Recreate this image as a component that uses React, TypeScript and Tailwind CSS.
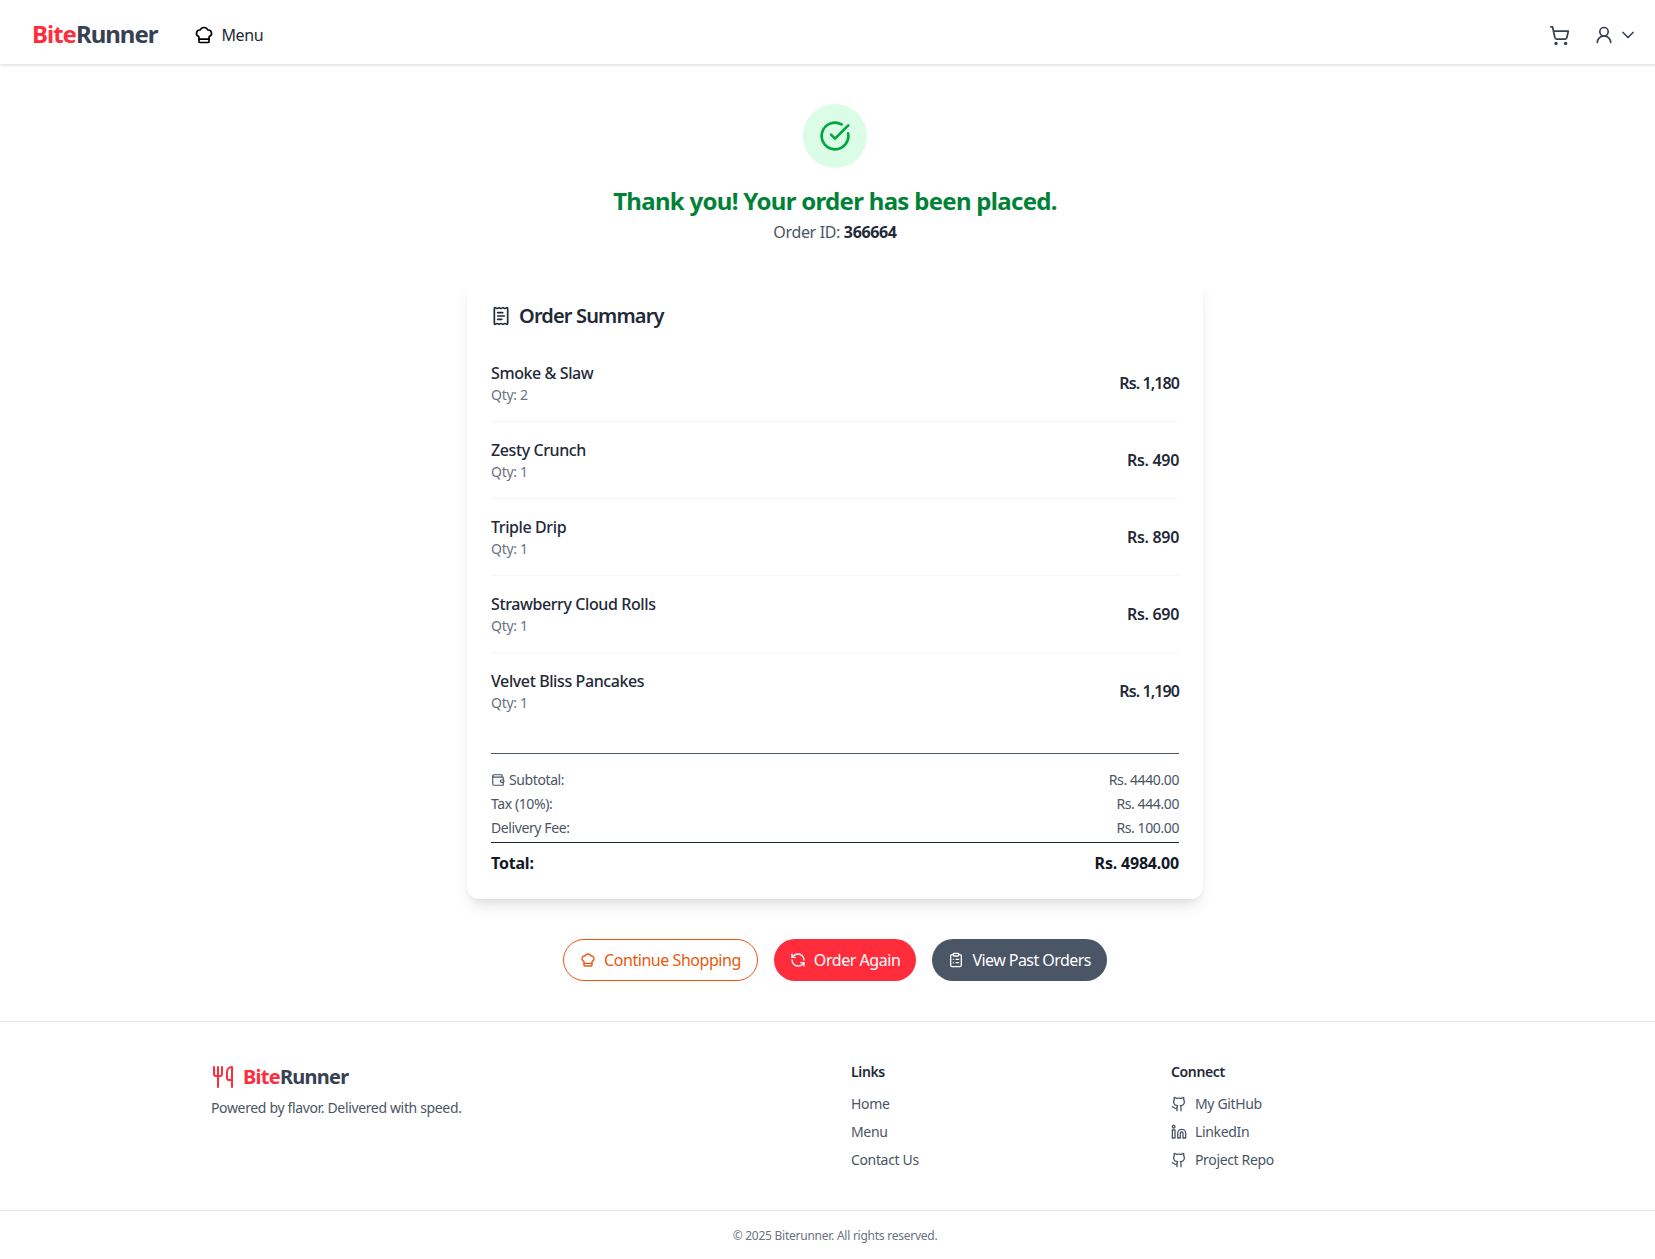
import {
  ChefHat,
  ChevronDown,
  CircleCheckBig,
  ClipboardList,
  Github,
  Linkedin,
  ReceiptText,
  RefreshCcw,
  ShoppingCart,
  UserRound,
  Utensils,
  Wallet,
} from "lucide-react";

const items = [
  { name: "Smoke & Slaw", qty: 2, price: "Rs. 1,180", priceClass: "tracking-[-0.9px]" },
  { name: "Zesty Crunch", qty: 1, price: "Rs. 490", priceClass: "tracking-[-0.3px]" },
  { name: "Triple Drip", qty: 1, price: "Rs. 890", priceClass: "tracking-[-0.3px]" },
  { name: "Strawberry Cloud Rolls", qty: 1, price: "Rs. 690", priceClass: "tracking-[-0.3px]" },
  { name: "Velvet Bliss Pancakes", qty: 1, price: "Rs. 1,190", priceClass: "tracking-[-0.9px]" },
];

function Header() {
  return (
    <header className="flex h-16 items-center justify-between bg-white px-8 pt-1.5 shadow-[0_1px_3px_rgba(0,0,0,0.16)]">
      <div className="flex items-center gap-9">
        <div className="-mt-0.5 text-2xl font-bold tracking-[-1px] text-[#374151]">
          <span className="text-[#ff2d3b]">Bite</span>Runner
        </div>
        <div className="flex items-center gap-2 text-base tracking-[-0.4px] text-[#1f2937]">
          <ChefHat className="h-5 w-5 text-black" />
          <span>Menu</span>
        </div>
      </div>
      <div className="flex items-center gap-6 text-[#374151]">
        <ShoppingCart className="h-[21px] w-[21px]" />
        <div className="flex items-center gap-1">
          <UserRound className="h-5 w-5" />
          <ChevronDown className="h-5 w-5" />
        </div>
      </div>
    </header>
  );
}

function OrderSummary() {
  return (
    <div className="mt-[33px] rounded-xl bg-white p-6 shadow-lg">
      <h2 className="mb-4 flex items-center gap-2 pt-0.5 text-xl leading-[26px] font-semibold tracking-[-0.85px] text-[#1f2937]">
        <ReceiptText className="h-5 w-5" />
        Order Summary
      </h2>
      <div className="divide-y divide-gray-100">
        {items.map((item) => (
          <div key={item.name} className="flex items-center justify-between py-4">
            <div>
              <p className="text-base font-medium tracking-[-0.4px] text-[#1f2937]">{item.name}</p>
              <p className="text-sm tracking-[-0.3px] text-gray-500">Qty: {item.qty}</p>
            </div>
            <p className={`text-base font-semibold text-[#1f2937] ${item.priceClass}`}>{item.price}</p>
          </div>
        ))}
      </div>
      <div className="mt-6 space-y-1 border-t border-gray-600 pt-4 text-sm tracking-[-0.4px] text-gray-600">
        <div className="flex justify-between">
          <span className="flex items-center gap-1">
            <Wallet className="h-3.5 w-3.5" />
            Subtotal:
          </span>
          <span>Rs. 4440.00</span>
        </div>
        <div className="flex justify-between">
          <span>Tax (10%):</span>
          <span>Rs. 444.00</span>
        </div>
        <div className="flex justify-between">
          <span>Delivery Fee:</span>
          <span>Rs. 100.00</span>
        </div>
        <div className="flex justify-between border-t border-gray-800 pt-2 text-base font-bold tracking-[-0.2px] text-[#111827]">
          <span>Total:</span>
          <span>Rs. 4984.00</span>
        </div>
      </div>
    </div>
  );
}

function Footer() {
  return (
    <footer className="border-t border-gray-200 bg-white">
      <div className="mx-auto grid max-w-7xl grid-cols-4 gap-8 px-4 py-10 text-sm tracking-[-0.35px] text-gray-600">
        <div className="col-span-2">
          <div className="flex items-center gap-2 text-xl font-bold tracking-[-0.75px] text-[#374151]">
            <Utensils className="h-6 w-6 text-[#ff2d3b]" />
            <div className="pt-px">
              <span className="text-[#ff2d3b]">Bite</span>Runner
            </div>
          </div>
          <p className="mt-[7px]">Powered by flavor. Delivered with speed.</p>
        </div>
        <div>
          <h3 className="mb-3 font-semibold text-[#1f2937]">Links</h3>
          <ul className="space-y-2">
            <li>Home</li>
            <li>Menu</li>
            <li>Contact Us</li>
          </ul>
        </div>
        <div>
          <h3 className="mb-3 font-semibold text-[#1f2937]">Connect</h3>
          <ul className="space-y-2">
            <li className="flex items-center gap-2">
              <Github className="h-4 w-4" />
              My GitHub
            </li>
            <li className="flex items-center gap-2">
              <Linkedin className="h-4 w-4" />
              LinkedIn
            </li>
            <li className="flex items-center gap-2">
              <Github className="h-4 w-4" />
              Project Repo
            </li>
          </ul>
        </div>
      </div>
      <div className="border-t border-gray-200 pt-[17px] pb-[15px] text-center text-xs tracking-[-0.25px] text-gray-500">
        © 2025 Biterunner. All rights reserved.
      </div>
    </footer>
  );
}

export default function App() {
  return (
    <div className="overflow-hidden">
      {/* page is a bit wider than the window, so everything sits right of center */}
      <div className="min-h-screen w-[1670px] bg-white font-['Noto_Sans',sans-serif]">
        <Header />
        <main className="mx-auto max-w-3xl px-4 py-10">
          <div className="text-center">
            <div className="mx-auto flex h-16 w-16 items-center justify-center rounded-full bg-green-100">
              <CircleCheckBig className="h-8 w-8 text-green-600" />
            </div>
            <h1 className="mt-4 pt-0.5 text-2xl leading-[30px] font-bold tracking-[-0.7px] text-green-700">
              Thank you! Your order has been placed.
            </h1>
            <p className="mt-1 text-base tracking-[-0.35px] text-gray-600">
              Order ID: <span className="font-bold text-[#1f2937]">366664</span>
            </p>
          </div>
          <OrderSummary />
          <div className="mt-10 flex justify-center gap-4 text-base tracking-[-0.45px]">
            <button className="flex items-center gap-2 rounded-full border border-[#ea580c] px-4 py-2 text-[#ea580c]">
              <ChefHat className="h-4 w-4" />
              Continue Shopping
            </button>
            <button className="flex items-center gap-2 rounded-full bg-[#ff2d3b] px-4 py-2 text-white">
              <RefreshCcw className="h-4 w-4" />
              Order Again
            </button>
            <button className="flex items-center gap-2 rounded-full bg-gray-600 px-4 py-2 tracking-[-0.55px] text-white">
              <ClipboardList className="h-4 w-4" />
              View Past Orders
            </button>
          </div>
        </main>
        <Footer />
      </div>
    </div>
  );
}
